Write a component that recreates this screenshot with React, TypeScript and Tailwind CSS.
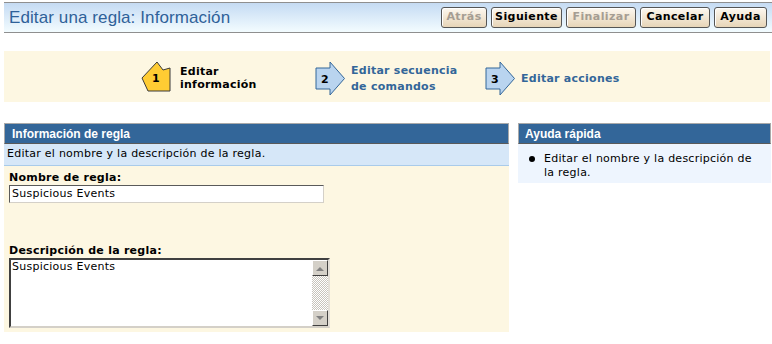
import React from 'react';

const buttons = [
    { label: 'Atrás', w: 'w-[46px]', disabled: true },
    { label: 'Siguiente', w: 'w-[71px]', disabled: false },
    { label: 'Finalizar', w: 'w-[70px]', disabled: true },
    { label: 'Cancelar', w: 'w-[70px]', disabled: false },
    { label: 'Ayuda', w: 'w-[53px]', disabled: false },
];

const StepCurrent: React.FC<{ n: number }> = ({ n }) => (
    <svg width="31" height="32" viewBox="0 0 31 32">
        <polygon points="1,17 16,1 22,9 29,7 29,30 7,30" fill="#ffcc33" stroke="#3a3a3a" strokeWidth="1" />
        <text x="15" y="21" textAnchor="middle" fontSize="11" fontWeight="bold" fontFamily="DejaVu Sans, sans-serif" fill="#000">{n}</text>
    </svg>
);

const StepNext: React.FC<{ n: number }> = ({ n }) => (
    <svg width="31" height="37" viewBox="0 0 31 37">
        <polygon points="1,7 15,7 15,1 29.5,17.5 15,34 15,28 1,28" fill="#b9d4ef" stroke="#336699" strokeWidth="1" />
        <text x="10" y="22" textAnchor="middle" fontSize="11" fontWeight="bold" fontFamily="DejaVu Sans, sans-serif" fill="#000">{n}</text>
    </svg>
);

const ScrollBtn: React.FC<{ up?: boolean }> = ({ up }) => (
    <div className="w-4 h-4 bg-[#d4d0c8] border border-t-white border-l-white border-r-[#404040] border-b-[#404040] flex items-center justify-center">
        <svg width="8" height="5" viewBox="0 0 8 5">
            {up ? <polygon points="0,5 4,1 8,5" fill="#808080" /> : <polygon points="0,0 4,4 8,0" fill="#808080" />}
        </svg>
    </div>
);

const App: React.FC = () => {
    return (
        <div className="w-[772px] h-[344px] bg-white overflow-hidden font-['DejaVu_Sans',Verdana,sans-serif] text-[11px] tracking-[0.25px] text-black">
            {/* title bar */}
            <div className="mt-[2px] ml-1 h-[31px] border-y border-[#8f8f8f] bg-gradient-to-b from-[#c5dbf3] to-[#f3fcff] flex items-center justify-between pl-[5px] pr-[5px]">
                <h1 className="font-['Liberation_Sans',Arial,sans-serif] text-[17px] tracking-[0.1px] text-[#2f6199] leading-none">Editar una regla: Información</h1>
                <div className="flex gap-1">
                    {buttons.map((b) => (
                        <button
                            key={b.label}
                            className={`${b.w} h-[21px] rounded-[3px] border border-[#555] bg-gradient-to-b from-[#fdf8f0] to-[#e7d5b8] shadow-[inset_1px_1px_0_#fff] text-[11px] font-bold tracking-[0.4px] ${b.disabled ? 'text-[#a59d92]' : 'text-black'}`}
                        >
                            {b.label}
                        </button>
                    ))}
                </div>
            </div>

            {/* steps */}
            <div className="mt-[18px] ml-1 mr-[2px] h-[51px] bg-[#fdf7e2] flex items-center pl-[137px] font-bold">
                <div className="w-[174px] flex items-center gap-[8px]">
                    <StepCurrent n={1} />
                    <div className="leading-[13px] pt-[2px]">Editar<br />información</div>
                </div>
                <div className="w-[170px] flex items-center gap-[5px] mt-[5px]">
                    <StepNext n={2} />
                    <div className="leading-[16px] text-[#336699]">Editar secuencia<br />de comandos</div>
                </div>
                <div className="flex items-center gap-[5px] mt-[5px]">
                    <StepNext n={3} />
                    <div className="text-[#336699]">Editar acciones</div>
                </div>
            </div>

            {/* panels */}
            <div className="mt-[21px] ml-1 flex gap-[9px]">
                <div className="w-[505px]">
                    <div className="h-[21px] bg-[#336699] border border-[#a9a9a9] border-b-[#5a5a5a] pl-[7px] flex items-center font-['Liberation_Sans',Arial,sans-serif] font-bold text-[12px] tracking-normal text-white">
                        Información de regla
                    </div>
                    <div className="h-[22px] bg-[#d6e7f8] border-b border-[#a9cbea] pl-[3px] flex items-center">
                        Editar el nombre y la descripción de la regla.
                    </div>
                    <div className="h-[166px] bg-[#fdf7e2] pl-[5px] pt-[5px]">
                        <div className="font-bold leading-[13px]">Nombre de regla:</div>
                        <div className="mt-[1px] w-[315px] h-[18px] border border-t-[#5a5a5a] border-l-[#5a5a5a] border-r-[#d4d0c8] border-b-[#d4d0c8] bg-white pl-[2px] leading-[16px]">
                            Suspicious Events
                        </div>
                        <div className="mt-[41px] font-bold leading-[13px]">Descripción de la regla:</div>
                        <div className="mt-[1px] w-[321px] h-[70px] border-2 border-t-[#404040] border-l-[#404040] border-r-[#e4e0d8] border-b-[#d4d0c8] bg-white flex">
                            <div className="flex-1 pl-[1px] leading-[14px]">Suspicious Events</div>
                            <div className="w-4 flex flex-col bg-[repeating-conic-gradient(#c8c4bc_0_25%,#ffffff_0_50%)] bg-[length:2px_2px]">
                                <ScrollBtn up />
                                <div className="flex-1" />
                                <ScrollBtn />
                            </div>
                        </div>
                    </div>
                </div>

                <div className="w-[253px]">
                    <div className="h-[21px] bg-[#336699] border border-[#a9a9a9] border-b-[#5a5a5a] pl-[6px] flex items-center font-['Liberation_Sans',Arial,sans-serif] font-bold text-[12px] tracking-normal text-white">
                        Ayuda rápida
                    </div>
                    <div className="h-[39px] bg-[#eef5fe] pt-[8px] pl-[11px] flex gap-[9px] leading-[14px]">
                        <span className="w-[6px] h-[6px] mt-[4px] rounded-full bg-black shrink-0" />
                        <span>Editar el nombre y la descripción de<br />la regla.</span>
                    </div>
                </div>
            </div>
        </div>
    );
};

export default App;
